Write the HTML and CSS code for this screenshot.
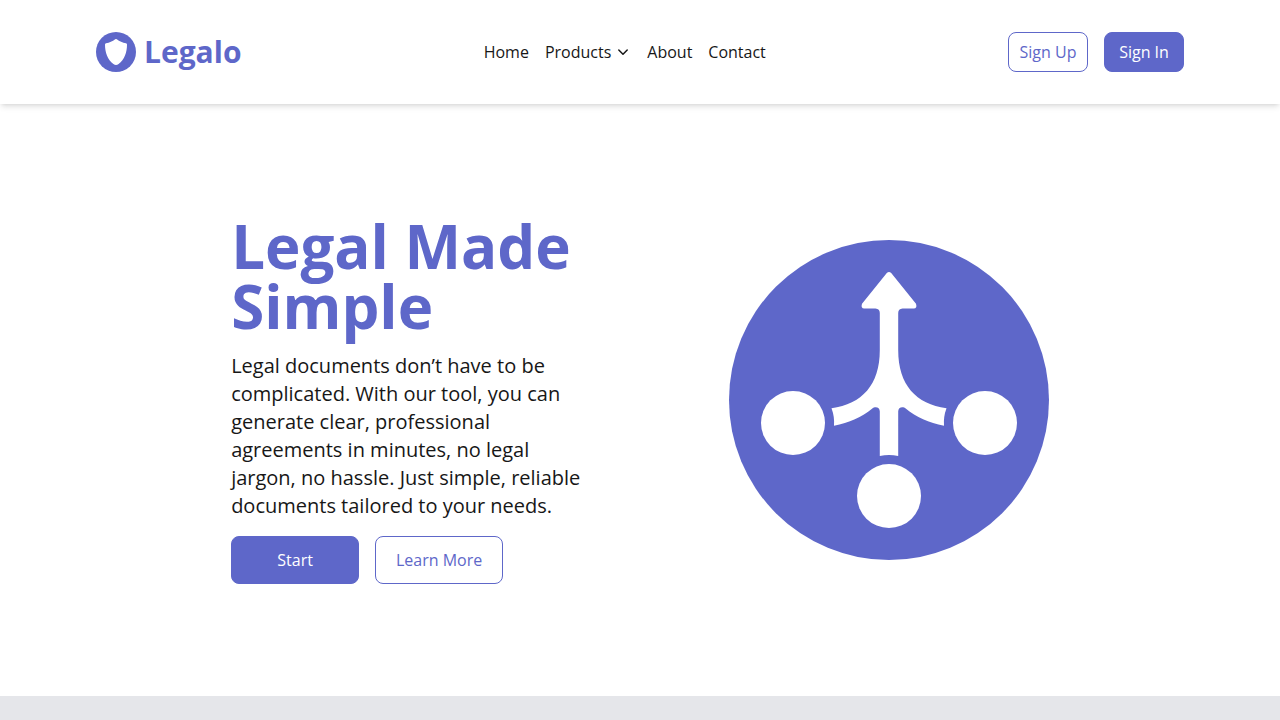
FILE: index.html
```
<!DOCTYPE html>
<html lang="en">
<head>
    <meta charset="UTF-8">
    <meta name="viewport" content="width=device-width, initial-scale=1.0">
    <title>Legalo</title>
    <link rel="stylesheet" href="styles.css">
</head>
<body>
    <header class="header">
        <a class="logo" href="#">
            <svg class="logo-icon" viewBox="0 0 40 40" aria-hidden="true">
                <circle cx="20" cy="20" r="20" fill="currentColor"/>
                <path d="M19.2 7.3 Q20 6.7 20.8 7.3 C23.5 9.4 26.5 10.8 30 11.3 Q31 11.5 31 12.5 C31 20.5 28.5 27.5 22.6 32 Q20 33.8 17.4 32 C11.5 27.5 9 20.5 9 12.5 Q9 11.5 10 11.3 C13.5 10.8 16.5 9.4 19.2 7.3 Z" fill="#fff"/>
            </svg>
            <span>Legalo</span>
        </a>

        <nav class="nav">
            <a href="#">Home</a>
            <a class="nav-dropdown" href="#">
                Products
                <svg class="chevron" viewBox="0 0 16 16" aria-hidden="true">
                    <path d="M3.8 6 L8 10.2 L12.2 6" fill="none" stroke="currentColor" stroke-width="1.5" stroke-linecap="round" stroke-linejoin="round"/>
                </svg>
            </a>
            <a href="#">About</a>
            <a href="#">Contact</a>
        </nav>

        <div class="buttons">
            <button type="button" class="btn btn-outline">Sign Up</button>
            <button type="button" class="btn btn-filled">Sign In</button>
        </div>
    </header>

    <main class="hero">
        <div class="hero-text">
            <h1>Legal Made Simple</h1>
            <p>Legal documents don’t have to be complicated. With our tool, you can generate clear, professional agreements in minutes, no legal jargon, no hassle. Just simple, reliable documents tailored to your needs.</p>
            <div class="buttons">
                <button type="button" class="btn btn-large btn-filled">Start</button>
                <button type="button" class="btn btn-large btn-outline">Learn More</button>
            </div>
        </div>

        <svg class="hero-icon" viewBox="0 0 320 320" aria-hidden="true">
            <circle cx="160" cy="160" r="160" fill="currentColor"/>
            <g fill="#fff">
                <circle cx="64" cy="183" r="32"/>
                <circle cx="256" cy="183" r="32"/>
                <circle cx="160" cy="256" r="32"/>
                <!-- three branches merging into one arrow -->
                <path d="M157.8 33 Q160 30.8 162.2 33 L187 63.8 Q188.4 68.4 184.8 68.6 H173.5 Q169.2 69 169.2 73 V110 C169.2 145 187 164 217.5 168.2 A41 41 0 0 0 215 185.8 C200 183 187 177 177 168.8 C173.5 166 169.2 167.5 169.2 171.5 V216 A41 41 0 0 0 150.8 216 V171.5 C150.8 167.5 146.5 166 143 168.8 C133 177 120 183 105 185.8 A41 41 0 0 0 102.5 168.2 C133 164 150.8 145 150.8 110 V73 Q150.8 69 146.5 68.6 H135.2 Q131.6 68.4 133 63.8 Z"/>
            </g>
        </svg>
    </main>

    <section class="next-section"></section>
</body>
</html>
```

FILE: styles.css
```
* {
    box-sizing: border-box;
}

body {
    display: flex;
    flex-direction: column;
    min-height: 100vh;
    margin: 0;
    font-family: "Open Sans", sans-serif;
    font-size: 16px;
    line-height: 24px;
    color: #171717;
    background-color: #fff;
}

h1,
p {
    margin: 0;
}

a {
    color: inherit;
    text-decoration: none;
}

.header {
    display: flex;
    align-items: center;
    justify-content: space-between;
    padding: 32px 96px;
    background-color: #fff;
    box-shadow: 0 4px 6px -1px rgba(0, 0, 0, 0.1), 0 2px 4px -2px rgba(0, 0, 0, 0.1);
}

.logo {
    display: flex;
    align-items: center;
    gap: 8px;
    font-size: 30px;
    line-height: 36px;
    font-weight: bold;
    color: #5e67c9;
}

.logo-icon {
    width: 40px;
    height: 40px;
}

.nav {
    display: flex;
    gap: 16px;
}

.nav-dropdown {
    display: flex;
    align-items: center;
    gap: 4px;
}

.chevron {
    width: 16px;
    height: 16px;
}

.buttons {
    display: flex;
    gap: 16px;
}

.btn {
    width: 80px;
    height: 40px;
    padding: 0;
    border: 1px solid #5e67c9;
    border-radius: 8px;
    font: inherit;
    cursor: pointer;
}

.btn-large {
    width: 128px;
    height: 48px;
}

.btn-filled {
    background-color: #5e67c9;
    color: #fff;
}

.btn-outline {
    background-color: #fff;
    color: #5e67c9;
}

.hero {
    display: flex;
    align-items: center;
    justify-content: space-evenly;
    padding: 112px 96px;
}

.hero-text {
    display: flex;
    flex-direction: column;
    gap: 16px;
    width: 33.33%;
}

.hero-text h1 {
    font-size: 60px;
    line-height: 60px;
    font-weight: bold;
    color: #5e67c9;
}

.hero-text p {
    font-size: 20px;
    line-height: 28px;
}

.hero-icon {
    width: 320px;
    height: 320px;
    color: #5e67c9;
}

.next-section {
    flex: 1;
    background-color: #e5e6ea;
}
```
